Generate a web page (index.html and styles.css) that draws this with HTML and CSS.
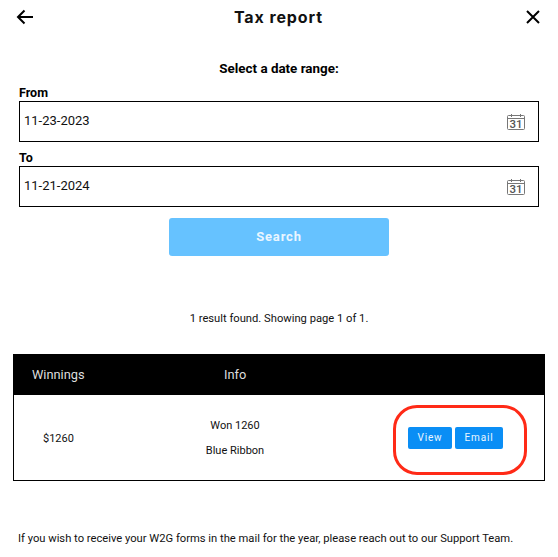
FILE: index.html
```html
<!DOCTYPE html>
<html lang="en">
<head>
  <meta charset="UTF-8" />
  <meta name="viewport" content="width=device-width, initial-scale=1.0"/>
  <title>Tax report</title>
  <link rel="stylesheet" href="styles.css">
</head>
<body>

  <header class="top-bar">
    <svg class="top-icon" width="18" height="16" viewBox="0 0 18 16" aria-label="Back">
      <path d="M17 8H2M8.500 1.500L2 8l6.500 6.500" fill="none" stroke="#000" stroke-width="2"/>
    </svg>
    <h1>Tax report</h1>
    <svg class="top-icon" width="14" height="14" viewBox="0 0 14 14" aria-label="Close">
      <path d="M1 1l12 12M13 1L1 13" fill="none" stroke="#000" stroke-width="2"/>
    </svg>
  </header>

  <form class="date-form">
    <h2>Select a date range:</h2>

    <label class="field-label">From</label>
    <div class="date-box">
      <span>11-23-2023</span>
      <svg class="cal-icon" width="18" height="18" viewBox="0 0 18 18">
        <path d="M1.500 2.500h15a1 1 0 0 1 1 1v12a1 1 0 0 1-1 1h-15a1 1 0 0 1-1-1v-12a1 1 0 0 1 1-1zM.5 5.500h17M4.500 1v3M13.500 1v3" fill="none" stroke="#777" stroke-width="1"/>
        <text x="9" y="15" text-anchor="middle" class="cal-num">31</text>
      </svg>
    </div>

    <label class="field-label to-label">To</label>
    <div class="date-box">
      <span>11-21-2024</span>
      <svg class="cal-icon" width="18" height="18" viewBox="0 0 18 18">
        <path d="M1.500 2.500h15a1 1 0 0 1 1 1v12a1 1 0 0 1-1 1h-15a1 1 0 0 1-1-1v-12a1 1 0 0 1 1-1zM.5 5.500h17M4.500 1v3M13.500 1v3" fill="none" stroke="#777" stroke-width="1"/>
        <text x="9" y="15" text-anchor="middle" class="cal-num">31</text>
      </svg>
    </div>

    <button type="button" class="search-btn">Search</button>
  </form>

  <p class="result-count">1 result found. Showing page 1 of 1.</p>

  <section class="results">
    <div class="results-head">
      <span class="col-win">Winnings</span>
      <span class="col-info">Info</span>
    </div>
    <div class="results-row">
      <div class="cell-win">$1260</div>
      <div class="cell-info">
        <p>Won 1260</p>
        <p>Blue Ribbon</p>
      </div>
      <div class="cell-actions">
        <button type="button" class="small-btn">View</button>
        <button type="button" class="small-btn">Email</button>
      </div>
      <div class="highlight"></div>
    </div>
  </section>

  <p class="footnote">If you wish to receive your W2G forms in the mail for the year, please reach out to our Support Team.</p>

</body>
</html>
```

FILE: styles.css
```css
html, body {
  height: 557px;
  overflow: hidden;
}

body {
  font-family: Roboto, sans-serif;
  margin: 0;
  background: #fff;
  color: #111;
}

.top-bar {
  display: flex;
  justify-content: space-between;
  align-items: center;
  height: 34px;
  padding: 0 18px 0 16px;
}

.top-bar h1 {
  margin: 0 3px 0 0;
  font-family: Inter, sans-serif;
  font-size: 16px;
  font-weight: 700;
  letter-spacing: 0.9px;
  color: #111;
}

.top-icon {
  display: block;
}

.date-form {
  padding: 27px 19px 0;
}

.date-form h2 {
  margin: 0 0 8px;
  font-size: 13.400px;
  line-height: 16px;
  font-weight: 700;
  text-align: center;
  color: #000;
}

.field-label {
  display: block;
  font-size: 12.500px;
  line-height: 16px;
  font-weight: 700;
  color: #000;
}

.to-label {
  margin-top: 8px;
}

.date-box {
  display: flex;
  justify-content: space-between;
  align-items: center;
  height: 41px;
  box-sizing: border-box;
  border: 1px solid #000;
  padding: 0 13px 2px 4px;
  font-size: 13px;
}

.cal-icon {
  display: block;
  margin-top: 2px;
}

.cal-num {
  font-family: Roboto, sans-serif;
  font-size: 11.500px;
  font-weight: 500;
  fill: #555;
}

.search-btn {
  display: block;
  width: 220px;
  height: 38px;
  margin: 11px auto 0;
  padding: 0 0 2px;
  background: #66c2ff;
  color: #eaf6ff;
  font-family: Roboto, sans-serif;
  font-size: 13px;
  font-weight: 700;
  letter-spacing: 0.8px;
  border: none;
  border-radius: 3px;
}

.result-count {
  margin: 55px 0 0;
  font-size: 11.200px;
  line-height: 16px;
  text-align: center;
}

.results {
  margin: 27px 13px 0;
}

.results-head {
  display: flex;
  align-items: center;
  height: 41px;
  background: #000;
  color: #ddd;
  font-size: 12.800px;
}

.col-win {
  margin-left: 19px;
  width: 192px;
}

.results-row {
  position: relative;
  display: flex;
  align-items: center;
  height: 86px;
  box-sizing: border-box;
  border: 1px solid #000;
  border-top: none;
  font-size: 11px;
}

.cell-win {
  width: 151px;
  padding: 2px 0 0 29px;
  box-sizing: border-box;
}

.cell-info {
  width: 130px;
  margin-left: 5px;
  text-align: center;
}

.cell-info p {
  margin: 0;
  line-height: 25px;
}

.cell-actions {
  display: flex;
  gap: 3px;
  margin-left: 108px;
}

.small-btn {
  height: 22px;
  width: 44px;
  padding: 0;
  background: #0a8ef5;
  color: #eaf6ff;
  font-family: Roboto, sans-serif;
  font-size: 10px;
  letter-spacing: 0.8px;
  border: none;
  border-radius: 2px;
}

.small-btn + .small-btn {
  width: 48px;
}

/* red ring marked on the screenshot */
.highlight {
  position: absolute;
  left: 379px;
  top: 10px;
  width: 134px;
  height: 70px;
  box-sizing: border-box;
  border: 3px solid #ff2a17;
  border-radius: 24px;
}

.footnote {
  margin: 50px 0 0 18px;
  font-size: 11.200px;
  line-height: 16px;
  white-space: nowrap;
}
```
